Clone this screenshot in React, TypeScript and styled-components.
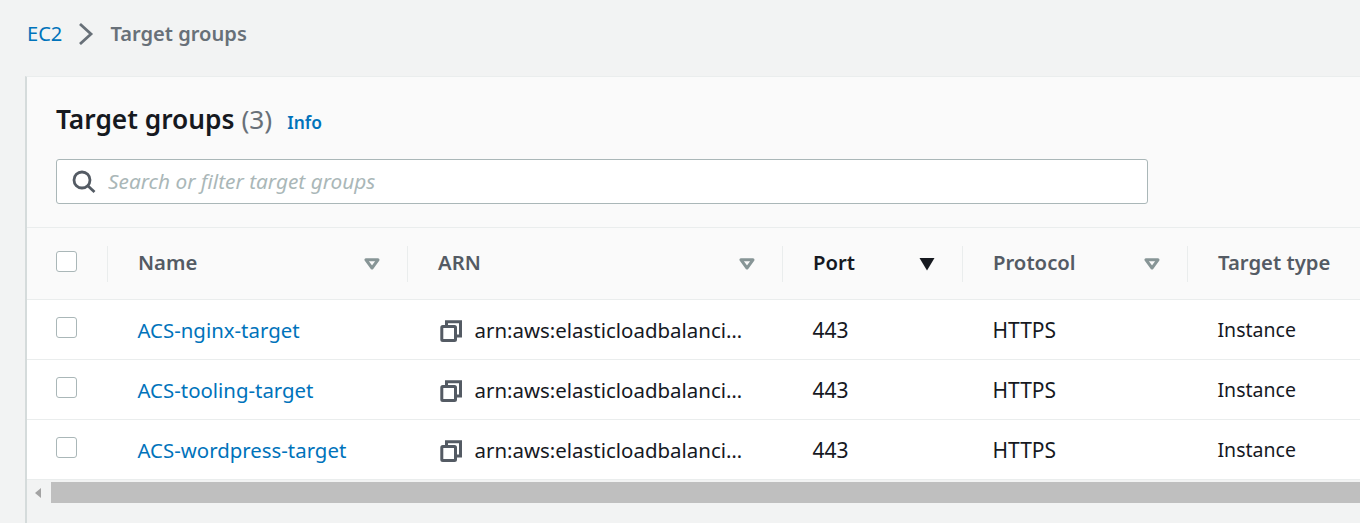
import React from 'react'
import styled, { createGlobalStyle } from 'styled-components'

const GlobalStyle = createGlobalStyle`
	html, body {
		margin: 0;
		padding: 0;
		height: 523px;
		overflow: hidden;
		background: #f2f3f3;
		font-family: 'Noto Sans', 'Open Sans', sans-serif;
		color: #16191f;
	}
`

const columns = '80px 300px 375px 180px 225px 1fr'

const rows = [
	{ name: 'ACS-nginx-target' },
	{ name: 'ACS-tooling-target' },
	{ name: 'ACS-wordpress-target' },
]

const SortIcon: React.FC<{ active?: boolean }> = ({ active }) => (
	<SortSvg viewBox="0 0 16 14">
		{active ? (
			<path d="M0.5 1h15L8 13.5z" fill="#16191f" />
		) : (
			<path d="M2 2.8h12L8 11z" fill="none" stroke="#879596" strokeWidth="3" strokeLinejoin="round" />
		)}
	</SortSvg>
)

const CopyIcon = () => (
	<CopySvg viewBox="0 0 22 22" fill="none" stroke="#545b64" strokeWidth="3">
		<rect x="1.8" y="6.5" width="13.7" height="14" rx="1" />
		<path d="M6.5 6V1.8h14v14.2H16" />
	</CopySvg>
)

export default function App() {
	return (
		<Page>
			<GlobalStyle />
			<Breadcrumbs>
				<CrumbLink>EC2</CrumbLink>
				<svg width="19" height="24" viewBox="0 0 19 24" fill="none">
					<path d="M3 3l11 10-11 10" stroke="#687078" strokeWidth="2.8" />
				</svg>
				<CrumbCurrent>Target groups</CrumbCurrent>
			</Breadcrumbs>
			<Card>
				<CardHeader>
					<TitleRow>
						<Title>
							Target groups <Count>(3)</Count>
						</Title>
						<InfoLink>Info</InfoLink>
					</TitleRow>
					<SearchBox>
						<svg width="24" height="24" viewBox="0 0 24 24" fill="none" stroke="#545b64" strokeWidth="2.8">
							<circle cx="10" cy="10" r="8" />
							<path d="M15.5 15.5l7 6.5" />
						</svg>
						<SearchInput placeholder="Search or filter target groups" readOnly />
					</SearchBox>
				</CardHeader>
				<HeadRow>
					<HeadCell $first>
						<CheckBox $raised />
					</HeadCell>
					<HeadCell>
						<HeadLabel>Name</HeadLabel>
						<SortIcon />
					</HeadCell>
					<HeadCell>
						<HeadLabel>ARN</HeadLabel>
						<SortIcon />
					</HeadCell>
					<HeadCell>
						<HeadLabel $active>Port</HeadLabel>
						<SortIcon active />
					</HeadCell>
					<HeadCell>
						<HeadLabel>Protocol</HeadLabel>
						<SortIcon />
					</HeadCell>
					<HeadCell>
						<HeadLabel>Target type</HeadLabel>
					</HeadCell>
				</HeadRow>
				{rows.map(row => (
					<BodyRow key={row.name}>
						<CheckCell>
							<CheckBox />
						</CheckCell>
						<BodyCell $size={20.4}>
							<NameLink>{row.name}</NameLink>
						</BodyCell>
						<BodyCell $size={20.45}>
							<CopyIcon />
							<span>arn:aws:elasticloadbalanci…</span>
						</BodyCell>
						<BodyCell $size={21}>443</BodyCell>
						<BodyCell $size={21}>HTTPS</BodyCell>
						<BodyCell>Instance</BodyCell>
					</BodyRow>
				))}
				<ScrollBar>
					<ScrollArrow />
					<ScrollThumb />
				</ScrollBar>
			</Card>
		</Page>
	)
}

const Page = styled.div`
	width: 1360px;
	height: 523px;
	overflow: hidden;
	padding-left: 25px;
	box-sizing: border-box;
`

const Breadcrumbs = styled.nav`
	height: 76px;
	padding: 0 0 10px 2px;
	box-sizing: border-box;
	display: flex;
	align-items: center;
	font-size: 20.1px;
	gap: 15px;
`

const CrumbLink = styled.a`
	color: #0073bb;
`

const CrumbCurrent = styled.span`
	margin-left: -1px;
	color: #687078;
	font-weight: 600;
`

const Card = styled.section`
	height: 447px;
	border-left: 2px solid #d5dbdb;
	border-top: 1px solid #eaeded;
`

const CardHeader = styled.header`
	height: 151px;
	box-sizing: border-box;
	padding: 21px 0 0 29px;
	background: #fafafa;
	border-bottom: 1px solid #eaeded;
`

const TitleRow = styled.div`
	display: flex;
	align-items: baseline;
	gap: 15px;
	height: 61px;
`

const Title = styled.h1`
	margin: 0;
	font-size: 26.3px;
	font-weight: 600;
	line-height: 42px;
	color: #16191f;
`

const Count = styled.span`
	font-weight: 400;
	color: #687078;
`

const InfoLink = styled.a`
	font-size: 17.4px;
	font-weight: 600;
	color: #0073bb;
`

const SearchBox = styled.div`
	width: 1092px;
	height: 45px;
	box-sizing: border-box;
	display: flex;
	align-items: center;
	gap: 12px;
	padding-left: 15px;
	background: #fff;
	border: 1px solid #aab7b8;
	border-radius: 3px;
`

const SearchInput = styled.input`
	flex: 1;
	margin-bottom: 2px;
	border: 0;
	outline: 0;
	padding: 0;
	background: transparent;
	font: italic 400 20.8px 'Noto Sans', sans-serif;
	&::placeholder {
		color: #aab7b8;
		opacity: 1;
	}
`

const HeadRow = styled.div`
	display: grid;
	grid-template-columns: ${columns};
	height: 71px;
	align-items: center;
	background: #fafafa;
	border-bottom: 1px solid #eaeded;
`

const HeadCell = styled.div<{ $first?: boolean }>`
	height: 36px;
	box-sizing: border-box;
	display: flex;
	align-items: center;
	padding: 0 27px 0 ${({ $first }) => ($first ? '29px' : '30px')};
	border-left: ${({ $first }) => ($first ? '0' : '1px solid #eaeded')};
`

const HeadLabel = styled.span<{ $active?: boolean }>`
	flex: 1;
	margin-bottom: 4px;
	font-size: 20.3px;
	font-weight: 600;
	white-space: nowrap;
	color: ${({ $active }) => ($active ? '#16191f' : '#545b64')};
`

const SortSvg = styled.svg`
	width: 16px;
	height: 14px;
	flex: none;
`

const CheckBox = styled.span<{ $raised?: boolean }>`
	display: block;
	width: 21px;
	height: 21px;
	box-sizing: border-box;
	margin-bottom: ${({ $raised }) => ($raised ? '4px' : '0')};
	background: #fff;
	border: 1.5px solid #aab7b8;
	border-radius: 3px;
`

const BodyRow = styled.div`
	display: grid;
	grid-template-columns: ${columns};
	height: 60px;
	box-sizing: border-box;
	background: #fff;
	border-bottom: 1px solid #eaeded;
`

const BodyCell = styled.div<{ $size?: number }>`
	display: flex;
	align-items: center;
	min-width: 0;
	padding: 0 0 0 30.5px;
	font-size: ${({ $size }) => $size ?? 19.5}px;
	white-space: nowrap;
`

const CheckCell = styled.div`
	display: flex;
	align-items: center;
	padding: 0 0 5px 29px;
`

const NameLink = styled.a`
	color: #0073bb;
`

const CopySvg = styled.svg`
	width: 22px;
	height: 22px;
	flex: none;
	margin: 3px 13px 0 2px;
`

const ScrollBar = styled.div`
	height: 23px;
	display: flex;
	align-items: flex-end;
	padding-left: 8px;
	background: #f2f3f3;
`

const ScrollArrow = styled.span`
	width: 0;
	height: 0;
	margin: 0 10px 5px 0;
	border-style: solid;
	border-width: 5.5px 6px 5.5px 0;
	border-color: transparent #a3a3a3 transparent transparent;
`

const ScrollThumb = styled.div`
	flex: 1;
	height: 21px;
	background: #bfbfbf;
`
